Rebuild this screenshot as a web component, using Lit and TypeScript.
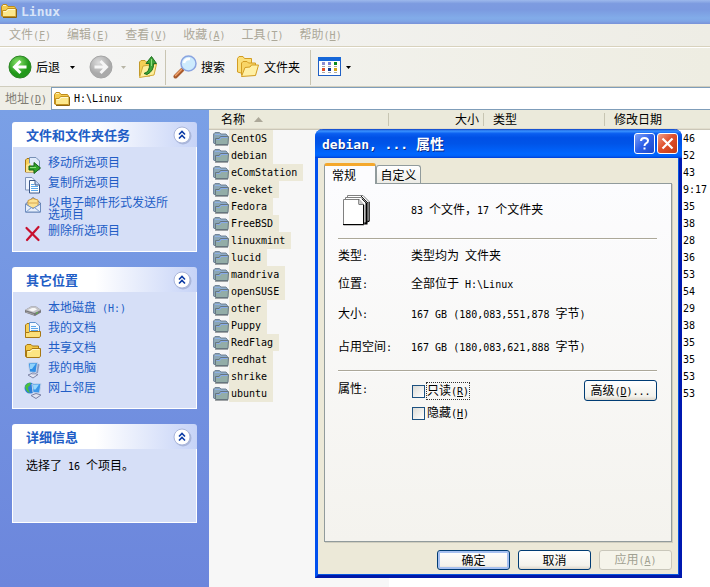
import { LitElement, html, css, svg } from "lit";
import { customElement, property } from "lit/decorators.js";

const base = css`
  :host { box-sizing: border-box; font-family: "Noto Sans CJK SC", sans-serif; font-size: 12px; line-height: 16px; color: #000; }
  *, *::before, *::after { box-sizing: border-box; }
  button, input { font: inherit; color: inherit; margin: 0; padding: 0; border: 0; background: none; }
  .m { font-family: "DejaVu Sans Mono", monospace; font-size: 10px; white-space: pre; }
  svg { display: block; flex: none; }
`;

/* Latin runs are set half as wide as a Chinese character. */
const t = (s: string) =>
  s.split(/([\x20-\x7e]+)/).filter(Boolean).map((p) =>
    /^[\x20-\x7e]/.test(p) ? html`<span class="m">${p}</span>` : p
  );
const key = (s: string, k: string, tail = "") =>
  html`<span>${s}<span class="m">(<u>${k}</u>)${tail}</span></span>`;

const box = (w: number, h: number, body: unknown) =>
  html`<svg width=${w} height=${h} viewBox="0 0 ${w} ${h}" aria-hidden="true">${body}</svg>`;

const folder = () => box(16, 16, svg`
  <path d="M0.500 13V3.500L2 1.500H5.500L7 3.500H13.500L14.500 5V13Z" fill="#f4cc50" stroke="#c08c1c"/>
  <path d="M2 2.500H5" stroke="#fff3b8"/>
  <path d="M1.500 13.500V7.500H5L6.500 5.500H15V13L14.500 13.500Z" fill="#fce88c" stroke="#c3921f"/>
  <path d="M2.500 8.500H5.500L7 6.500H14" stroke="#fff8d4" fill="none"/>
  <path d="M2 14.500H15.500V6" stroke="#8c6410" fill="none"/>`);

const greyFolder = () => box(16, 16, svg`
  <path d="M0.500 12V3L2 1.500H6.500L8 3H13L14.500 4.500V12.500H1Z" fill="#8ba6b4" stroke="#74859c"/>
  <path d="M2 3.500H7L8.500 5H13" stroke="#8fb0e6" fill="none"/>
  <path d="M2.500 13.500V7.500H6L7.500 5.500H15.500L15 13.500Z" fill="#93ada8" stroke="#66757e"/>
  <path d="M3.500 8.500H7L8 6.500H14.500" stroke="#86a9ec" fill="none"/>
  <path d="M2 14.500H15" stroke="#a0a4a6"/>`);

const move = () => box(18, 18, svg`
  <path d="M1.500 16V4L3 2.500H6L7 4H10V16Z" fill="#f5cf5a" stroke="#a87512"/>
  <path d="M5.500 1.500H12L15.500 5V14H5.500Z" fill="#dfeafb" stroke="#7790b5"/>
  <path d="M2 16V9L6 7L10 16Z" fill="#fbe68e"/>
  <path d="M5 10H10V6.500L16.500 12L10 17.500V14H5Z" fill="#2fa32b" stroke="#176016"/>
  <path d="M6 11.500H12" stroke="#8be07e"/>`);
const copy = () => box(18, 18, svg`
  <path d="M1.500 1.500H8L11.500 5V14H1.500Z" fill="#eef4ff" stroke="#7e93b8"/>
  <path d="M5.500 4.500H11L15.500 9V17H5.500Z" fill="#fff" stroke="#3b5788"/>
  <path d="M11 4.500V9H15.500" fill="#bcd3f5" stroke="#3b5788"/>
  <path d="M7 8.500H10M7 10.500H14M7 12.500H14M7 14.500H14" stroke="#5aa6ea"/>`);
const mail = () => box(18, 18, svg`
  <path d="M1.500 8L9 1.500L16.500 7V16H1.500Z" fill="#b7cbe8" stroke="#6079a8"/>
  <path d="M4 4.500L9 2.500L14 4V12H4Z" fill="#fbe293" stroke="#d09a3c"/>
  <path d="M5 7H13" stroke="#d8a650"/>
  <path d="M1.500 8L9 12.500L16.500 8V16H1.500Z" fill="#e6eefb" stroke="#6d8cbd"/>
  <path d="M2 16L7.500 11.500M16 16L10.500 11.500" stroke="#7c9ed0"/>`);
const cross = () => box(18, 18, svg`
  <path d="M2.500 4L14.500 16M14.500 3L3 16" stroke="#c8102e" stroke-width="2.200" stroke-linecap="round"/>`);
const disk = () => box(18, 18, svg`
  <path d="M1 9L7 5.500H12L17 9V11.500L11 15L1 11.500Z" fill="#77777a"/>
  <path d="M1 9L7 5.500H12L17 9L10.500 12Z" fill="#c4c4c8"/>
  <path d="M4 9L8 7H11L13 8.500L9 10.500Z" fill="#f7f7f7"/>
  <path d="M2 11L10 13.500" stroke="#a5a5a8"/><path d="M12 12.500L14 11.500" stroke="#56c940"/>`);
const docs = () => box(18, 18, svg`
  <path d="M1.500 16V4L3 2.500H6L7 4H13.500V16Z" fill="#f6cf58" stroke="#a87814"/>
  <path d="M5.500 12V1.500H11.500L15.500 5V12Z" fill="#f3f9ff" stroke="#5d92cf"/>
  <path d="M7 5.500H12M7 7.500H14M7 9.500H14" stroke="#5aa6ea"/>
  <path d="M1.500 16.500V11.500H5L6 10.500H16.500V15L15.500 16.500Z" fill="#fbe07a" stroke="#a87814"/>`);
const shared = () => box(18, 18, svg`
  <path d="M1.500 15.500V5L3 3.500H7L8.500 5H14.500V15Z" fill="#f3c846" stroke="#a87814"/>
  <path d="M2.500 16.500V9.500H6L8 7.500H16.500V15L15.500 16.500Z" fill="#fce583" stroke="#a87814"/>
  <path d="M4 10.500H7L8.500 8.500H15" stroke="#fff6cb" fill="none"/>`);
const computer = () => box(18, 18, svg`
  <path d="M13 2L15.500 3.500L14 12L11 12Z" fill="#8d9bc0"/>
  <path d="M4.500 2L13.500 1.500L12 11.500L5.500 11Z" fill="#2f8fe6" stroke="#c6d4ea"/>
  <path d="M6 3L12 2.500L8 8H6Z" fill="#8fd2fb"/>
  <path d="M4 14L9 12L14 13.500L9 17Z" fill="#e3e5f2" stroke="#7f86a8"/>
  <path d="M8 11.500H11V13.500H8Z" fill="#a3abc8"/>`);
const network = () => box(18, 18, svg`
  <circle cx="6" cy="7" r="5.500" fill="#2d7fd8"/>
  <path d="M1 5Q4 1 7 2Q6 5 4 6Q4 9 6 12Q2 11 1 5Z" fill="#4bbf3c"/>
  <path d="M8 3L17 2.500L15.500 12L9 11.500Z" fill="#3b97ea" stroke="#c4d2ea"/>
  <path d="M9 4L15 3.500L11.500 8.500H9.500Z" fill="#9bd8fc"/>
  <path d="M7 14.500L12 12.500L17 14L12 17.500Z" fill="#dfe2f0" stroke="#7a82a6"/>`);

const backIcon = () => box(24, 24, svg`
  <defs><radialGradient id="gb" cx="0.400" cy="0.300"><stop offset="0" stop-color="#8be36b"/><stop offset="1" stop-color="#22981a"/></radialGradient></defs>
  <circle cx="12" cy="12" r="11" fill="url(#gb)" stroke="#2d8426"/>
  <path d="M12.500 6L6.500 12L12.500 18M7 12H18.500" fill="none" stroke="#fff" stroke-width="3"/>`);
const forwardIcon = () => box(24, 24, svg`
  <defs><radialGradient id="gf" cx="0.400" cy="0.300"><stop offset="0" stop-color="#dcdcdc"/><stop offset="1" stop-color="#aaaaaa"/></radialGradient></defs>
  <circle cx="12" cy="12" r="11" fill="url(#gf)" stroke="#a5a5a5"/>
  <path d="M11.500 6L17.500 12L11.500 18M17 12H5.500" fill="none" stroke="#f6f6f6" stroke-width="3"/>`);
const upIcon = () => box(20, 24, svg`
  <path d="M1.500 21V7L3 5.500H7L8.500 7H12V21Z" fill="#f4d056" stroke="#c39a2a"/>
  <path d="M1.500 22.500L5 11L18.500 9L16 20Z" fill="#fdee9c" stroke="#d2a937"/>
  <path d="M6 18.500Q12 17 11.500 8.500H8L13.500 1.500L18.500 8.500H15.500Q16 16 9 19.500Z" fill="#3da437" stroke="#1f6f1e"/>
  <path d="M13.500 4V11" stroke="#8edd7c"/>`);
const searchIcon = () => box(24, 24, svg`
  <path d="M2.500 21.500L9 15" stroke="#a85a2c" stroke-width="4" stroke-linecap="round"/>
  <path d="M2.500 20.500L8.500 14.500" stroke="#f2a36c" stroke-width="1.500" stroke-linecap="round"/>
  <circle cx="15.500" cy="8.500" r="7.500" fill="#cdebfd" stroke="#8aa4e0" stroke-width="1.500"/>
  <path d="M11 8Q12 3.500 17 4" stroke="#fff" stroke-width="2.500" fill="none"/>`);
const foldersIcon = () => box(24, 24, svg`
  <path d="M1.500 17V3.500L3 1.500H7L8.500 3.500H15.500V8L5 18Z" fill="#fbe07c" stroke="#d39d22"/>
  <path d="M5.500 20V8L7 6.500H11L12.500 8H19.500V20Z" fill="#f8d566" stroke="#d39d22"/>
  <path d="M5.500 21.500L9 12.500L14 12L15.500 10H22.500L19.500 20.500Z" fill="#fff0a6" stroke="#d39d22"/>`);
const viewsIcon = () => box(24, 20, svg`
  <rect x="0.500" y="0.500" width="22" height="18" fill="#fff" stroke="#1f5fc4"/>
  <rect x="0" y="0" width="23" height="4" fill="#1667d8"/>
  <rect x="4" y="5" width="3" height="3" fill="#8f8fd0"/><rect x="10" y="5" width="3" height="3" fill="#7a80d8"/><rect x="16" y="5" width="3" height="3" fill="#0c8a1c"/>
  <rect x="4" y="11" width="3" height="3" fill="#e0502a"/><rect x="10" y="11" width="3" height="3" fill="#123a92"/><rect x="16" y="11" width="3" height="3" fill="#d5a414"/>
  <path d="M4 9.500H7M10 9.500H13M16 9.500H19M4 15.500H7M10 15.500H13M16 15.500H19" stroke="#a8a8a8"/>`);
const caret = () => box(5, 3, svg`<path d="M0 0H5L2.500 3Z" fill="currentColor"/>`);
const pages = () => box(30, 32, svg`
  <path d="M5.500 1.500H21L27.500 8V27H5.500Z" fill="#fff" stroke="#808080"/><path d="M27 8V27.500H22" stroke="#000" fill="none"/>
  <path d="M3.500 3.500H19L25 9V29H3.500Z" fill="#fff" stroke="#808080"/><path d="M24.500 9V29.500H20" stroke="#000" stroke-width="2" fill="none"/>
  <path d="M1.500 5.500H17L22 11V31H1.500Z" fill="#fff" stroke="#808080"/>
  <path d="M21.500 10V30.500H1" stroke="#000" fill="none"/>
  <path d="M17 5.500V10.500H22M19 2L26 9M20 5L24 9" stroke="#222" fill="none"/><path d="M17 5.500L22 10.500H17Z" fill="#c8c8c8"/>`);
const chevrons = () => box(26, 26, svg`
  <circle cx="14" cy="14" r="8.500" fill="#8795bd" opacity="0.500"/>
  <circle cx="13" cy="13" r="8" fill="#fff" stroke="#aab6da"/>
  <path d="M10 12.500L13 9.500L16 12.500M10 16.500L13 13.500L16 16.500" fill="none" stroke="#0a3aa5" stroke-width="1.600"/>`);

@customElement("task-panel")
class TaskPanel extends LitElement {
  @property() heading = "";
  static styles = [base, css`
    :host { display: block; }
    .head { display: flex; align-items: center; justify-content: space-between; height: 25px; padding: 0 2px 0 14px; border-radius: 3px 3px 0 0; background: linear-gradient(90deg, #fff 45%, #c6d3f7); }
    h2 { margin: 0; font-size: 13px; line-height: 16px; font-weight: 700; color: #215dc6; }
    .toggle { display: block; width: 26px; height: 26px; }
    .body { border: 1px solid #fff; border-top: 0; background: #d6dff7; padding: 9px 11px 11px; }
  `];
  render() {
    return html`<section>
      <div class="head"><h2>${this.heading}</h2><button class="toggle" aria-label=${this.heading}>${chevrons()}</button></div>
      <div class="body"><slot></slot></div>
    </section>`;
  }
}

@customElement("properties-dialog")
class PropertiesDialog extends LitElement {
  static styles = [base, css`
    :host { display: flex; flex-direction: column; background: #ece9d8; border: 3px solid #0831d9; border-top: 0; border-color: #0054e8 #0018b0 #0018a8 #0050ee; border-radius: 8px 8px 0 0; box-shadow: inset -1px -1px #0855dd; }
    .title { display: flex; align-items: center; gap: 2px; height: 29px; margin: 0 -3px; padding: 0 4px 0 7px; border-radius: 8px 8px 0 0; background: linear-gradient(#0b3fc4 0, #3a92ff 7%, #0a5ef0 16%, #0050e6 30%, #0054e8 50%, #0066ff 85%, #0062f8 93%, #003dd7); color: #fff; }
    h1 { flex: 1; margin: 0; font-size: 14px; line-height: 18px; font-weight: 700; text-shadow: 1px 1px #0a2a88; }
    h1 .m { font-size: 13px; }
    .win { display: grid; place-items: center; width: 21px; height: 21px; border: 1px solid #fff; border-radius: 3px; background: linear-gradient(135deg, #7ba0f8, #2c5fe8 50%, #1c48c8); }
    .close { background: linear-gradient(135deg, #f0a088, #e0502c 45%, #c23a14); }
    .main { display: flex; flex-direction: column; padding: 5px 7px 5px 6px; }
    .tabs { display: flex; align-items: flex-end; height: 20px; }
    .tab { border: 1px solid #919b9c; border-bottom: 0; border-radius: 3px 3px 0 0; height: 18px; width: 45px; background: linear-gradient(#fff, #ecebe6); }
    .on { position: relative; height: 21px; width: 52px; margin-bottom: -1px; padding: 0 12px 0 0; border-top: 3px solid #f4a82c; background: #fcfcfe; }
    .sheet { border: 1px solid #919b9c; background: linear-gradient(#fcfcfe, #f4f3ee); box-shadow: 1px 1px #d0cebf; padding: 10px 14px 120px 13px; }
    .row { display: grid; grid-template-columns: 73px 1fr; align-items: center; height: 28px; }
    .row.first { height: 32px; margin-bottom: 12px; }
    .row.mid { height: 32px; }
    .row.tall { height: 34px; margin-bottom: 6px; }
    .pic { padding-left: 4px; }
    hr { margin: 0 0 2px; border: 0; height: 2px; border-top: 1px solid #aca899; border-bottom: 1px solid #fff; }
    .attrs { display: grid; grid-template-columns: 73px 1fr auto; align-items: start; padding-top: 6px; }
    .checks { display: grid; gap: 6px; padding: 3px 0 0 1px; }
    label { display: flex; align-items: center; gap: 2px; height: 16px; width: max-content; }
    label > span { line-height: 14px; }
    .focus > span { outline: 1px dotted #333; }
    input { appearance: none; width: 13px; height: 13px; border: 1px solid #1c5180; background: linear-gradient(135deg, #dcdcd7, #fff); }
    .btn { height: 21px; width: 73px; border: 1px solid #003c74; border-radius: 3px; background: linear-gradient(#fff, #f3f2ec 80%, #dcd6cb); line-height: 16px; }
    .default { box-shadow: inset 0 0 0 2px #a6c0f0; }
    .btn:disabled { color: #a1a192; border-color: #c9c7ba; background: #f5f4ea; }
    .foot { display: flex; justify-content: flex-end; gap: 8px; padding-top: 8px; }
    .foot .btn { height: 20px; line-height: 14px; }
  `];
  render() {
    const row = (k: string, v: string, c = "") => html`<div class="row ${c}"><span>${t(k)}</span><span>${t(v)}</span></div>`;
    return html`
      <div class="title"><h1>${t("debian, ... 属性")}</h1>
        <button class="win" aria-label="帮助">${box(15, 15, svg`<path d="M4 5Q4 2 7.500 2Q11 2 11 4.700Q11 6.300 9 7.400Q7.500 8.300 7.500 10M7.500 11.500V13.500" fill="none" stroke="#fff" stroke-width="2"/>`)}</button>
        <button class="win close" aria-label="关闭">${box(15, 15, svg`<path d="M2.500 2.500L12.500 12.500M12.500 2.500L2.500 12.500" stroke="#fff" stroke-width="2.200"/>`)}</button>
      </div>
      <div class="main">
        <div class="tabs" role="tablist"><button class="tab on" role="tab" aria-selected="true">常规</button><button class="tab" role="tab">自定义</button></div>
        <div class="sheet">
          <div class="row first"><span class="pic">${pages()}</span><span>${t("83 个文件\uff0c17 个文件夹")}</span></div>
          <hr />
          ${row("类型:", "类型均为 文件夹")}
          ${row("位置:", "全部位于 H:\\Linux")}
          ${row("大小:", "167 GB (180,083,551,878 字节)", "mid")}
          ${row("占用空间:", "167 GB (180,083,621,888 字节)", "tall")}
          <hr />
          <div class="attrs"><span>${t("属性:")}</span>
            <div class="checks">
              <label class="focus"><input type="checkbox" />${key("只读", "R")}</label>
              <label><input type="checkbox" />${key("隐藏", "H")}</label>
            </div>
            <button class="btn">${key("高级", "D", "...")}</button>
          </div>
        </div>
        <div class="foot"><button class="btn default">确定</button><button class="btn">取消</button><button class="btn" disabled>${key("应用", "A")}</button></div>
      </div>`;
  }
}

const FILES: [string, string][] = [
  ["CentOS", "46"], ["debian", "52"], ["eComStation", "43"], ["e-veket", "9:17"], ["Fedora", "35"], ["FreeBSD", "38"],
  ["linuxmint", "28"], ["lucid", "36"], ["mandriva", "53"], ["openSUSE", "54"], ["other", "29"], ["Puppy", "38"],
  ["RedFlag", "35"], ["redhat", "35"], ["shrike", "53"], ["ubuntu", "53"],
];
const MENUS: [string, string][] = [["文件", "F"], ["编辑", "E"], ["查看", "V"], ["收藏", "A"], ["工具", "T"], ["帮助", "H"]];
const TASKS: [() => unknown, string][] = [[move, "移动所选项目"], [copy, "复制所选项目"], [mail, "以电子邮件形式发送所选项目"], [cross, "删除所选项目"]];
const PLACES: [() => unknown, string][] = [[disk, "本地磁盘 (H:)"], [docs, "我的文档"], [shared, "共享文档"], [computer, "我的电脑"], [network, "网上邻居"]];

@customElement("app-root")
class AppRoot extends LitElement {
  static styles = [base, css`
    :host { display: flex; flex-direction: column; min-height: 100vh; position: relative; overflow: hidden; background: #fff; }
    .title { display: flex; align-items: center; gap: 4px; height: 24px; padding: 0 1px 3px; background: linear-gradient(#9db9ec, #7d9be0 15%, #7b9ae0 40%, #82ace9 75%, #80a6e6 88%, #7891d8); color: #d8e4f8; }
    h1 { margin: 0; font-size: 14px; line-height: 18px; }
    h1 .m { font-size: 13px; }
    .menu { display: flex; align-items: center; gap: 16px; height: 23px; padding-left: 9px; background: linear-gradient(90deg, #f5f5f6, #eeede5); border-bottom: 1px solid #d8d2bd; color: #aca899; }
    .tools { display: flex; align-items: center; height: 40px; padding-left: 8px; border-top: 1px solid #fff; border-bottom: 1px solid #d0cdbd; background: linear-gradient(90deg, #f5f5f5, #eeede2); }
    .tools button { display: flex; align-items: center; gap: 4px; height: 30px; }
    .tools .drop { width: 29px; padding-right: 5px; justify-content: center; }
    .tools .dim { width: 25px; color: #b8b5a5; }
    .sep { width: 1px; height: 35px; background: #c9c5b2; margin: 0 7px; }
    .tools .folders { margin: 0 3px 0 11px; }
    .address { display: flex; height: 23px; background: #efeee6; }
    .address label { width: 51px; padding-left: 5px; line-height: 22px; color: #7f7c73; }
    .field { flex: 1; display: flex; align-items: center; gap: 4px; padding-left: 2px; border: 1px solid #7f9db9; border-right: 0; background: #fff; }
    .field input { flex: 1; min-width: 0; height: 18px; font-family: "DejaVu Sans Mono", monospace; font-size: 10px; }
    .work { flex: 1; display: flex; }
    aside { flex: none; width: 209px; padding: 12px; display: flex; flex-direction: column; gap: 15px; background: linear-gradient(#7aa0e6, #6c86dc); }
    ul { list-style: none; margin: 0; padding: 0; display: grid; gap: 4px; }
    a { display: flex; gap: 6px; min-height: 16px; line-height: 12px; color: #215dc6; text-decoration: none; }
    a svg { margin-bottom: -2px; }
    a span { max-width: 124px; }
    .note { margin: 0 2px; height: 53px; line-height: 14px; }
    main { flex: 1; min-width: 0; background: linear-gradient(#f7f7f7, #f7f7f7) 0 0 / 180px 100% no-repeat #fff; }
    table { width: 100%; border-collapse: collapse; table-layout: fixed; }
    .c1 { width: 180px; } .c2 { width: 95px; } .c3 { width: 121px; }
    thead { background: #ebeadb; box-shadow: inset 0 -1px #cbc7b8, inset 0 -2px #e2decd; }
    th { height: 20px; padding: 0 9px 2px; font-weight: 400; text-align: left; line-height: 14px; background: linear-gradient(#c7c5b2, #c7c5b2) 100% 3px / 1px 13px no-repeat; }
    th:first-child { padding-left: 12px; } th:last-child { background: none; }
    .size { text-align: right; padding-right: 5px; }
    .sort { display: flex; align-items: center; gap: 9px; }
    td { padding: 0; height: 17px; line-height: 17px; }
    .file { display: flex; align-items: center; padding-left: 4px; }
    .file b { font-weight: 400; height: 17px; padding: 0 6px 0 2px; background: #ece9d8; }
    .date { padding-left: 78px; }
    properties-dialog { position: absolute; left: 315px; top: 129px; width: 367px; }
  `];
  render() {
    const links = (xs: [() => unknown, string][]) => html`<ul>${xs.map(([i, s]) => html`<li><a href="#">${i()}<span>${t(s)}</span></a></li>`)}</ul>`;
    return html`
      <header class="title">${folder()}<h1>${t("Linux")}</h1></header>
      <nav class="menu">${MENUS.map(([s, k]) => html`<button>${key(s, k)}</button>`)}</nav>
      <div class="tools">
        <button>${backIcon()}后退</button><button class="drop" aria-label="后退列表">${caret()}</button>
        <button aria-label="前进">${forwardIcon()}</button><button class="drop dim" aria-label="前进列表">${caret()}</button>
        <button aria-label="向上">${upIcon()}</button><i class="sep"></i>
        <button>${searchIcon()}搜索</button>
        <button class="folders">${foldersIcon()}文件夹</button><i class="sep"></i>
        <button aria-label="查看">${viewsIcon()}${caret()}</button>
      </div>
      <div class="address"><label for="addr">${key("地址", "D")}</label><div class="field">${folder()}<input id="addr" value="H:\\Linux" /></div></div>
      <div class="work">
        <aside>
          <task-panel heading="文件和文件夹任务">${links(TASKS)}</task-panel>
          <task-panel heading="其它位置">${links(PLACES)}</task-panel>
          <task-panel heading="详细信息"><p class="note">${t("选择了 16 个项目。")}</p></task-panel>
        </aside>
        <main>
          <table>
            <colgroup><col class="c1" /><col class="c2" /><col class="c3" /><col /></colgroup>
            <thead><tr><th><span class="sort">名称${box(9, 5, svg`<path d="M0 5L4.500 0L9 5Z" fill="#aca899"/>`)}</span></th><th class="size">大小</th><th>类型</th><th>修改日期</th></tr></thead>
            <tbody>${FILES.map(([n, d]) => html`<tr><td class="m"><span class="file">${greyFolder()}<b>${n}</b></span></td><td class="m"></td><td class="m"></td><td class="m date">${d}</td></tr>`)}</tbody>
          </table>
        </main>
      </div>
      <properties-dialog role="dialog"></properties-dialog>`;
  }
}
